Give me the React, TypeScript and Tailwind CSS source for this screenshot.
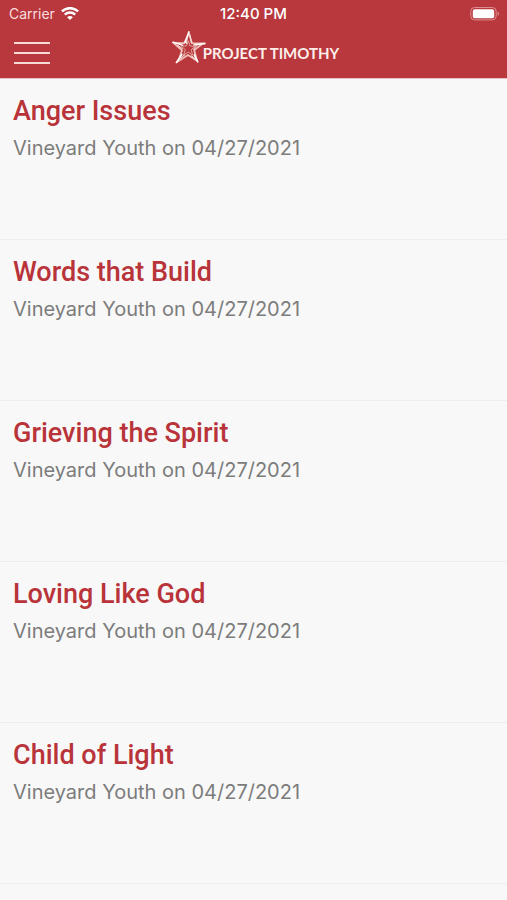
const talks = [
  { title: 'Anger Issues', byline: 'Vineyard Youth on 04/27/2021' },
  { title: 'Words that Build', byline: 'Vineyard Youth on 04/27/2021' },
  { title: 'Grieving the Spirit', byline: 'Vineyard Youth on 04/27/2021' },
  { title: 'Loving Like God', byline: 'Vineyard Youth on 04/27/2021' },
  { title: 'Child of Light', byline: 'Vineyard Youth on 04/27/2021' },
];

function WifiIcon() {
  return (
    <svg className="h-[14px] w-[18px]" viewBox="0 0 18 14" fill="none" stroke="#fff" aria-hidden="true">
      <path d="M.9 4.4C5.5.1 12.5.1 17.1 4.4" strokeWidth="2.6" />
      <path d="M3.8 7.6c3-2.8 7.4-2.8 10.4 0" strokeWidth="2.4" />
      <path d="M9 13 6.1 10.2c1.7-1.5 4.1-1.5 5.8 0Z" fill="#fff" stroke="none" />
    </svg>
  );
}

function BatteryIcon() {
  return (
    <svg className="h-[14px] w-[30px]" viewBox="0 0 30 14" aria-hidden="true">
      <rect x=".8" y=".5" width="25.4" height="12.4" rx="3.8" fill="none" stroke="#dd8f90" />
      <rect x="2.8" y="2.2" width="21.4" height="9" rx="1.8" fill="#fff" />
      <path d="M27.6 4.6V9c1.9-.7 1.9-3.7 0-4.4Z" fill="#dd8f90" />
    </svg>
  );
}

function StarLogo() {
  return (
    <svg className="h-[34px] w-[34px]" viewBox="0 0 34 34" fill="none" aria-hidden="true">
      <path
        d="m17 3.4 3 9.8 11 .2-8.8 6.6 2.8 10.8-9-5.8-9.6 6.2 3.6-11L1.6 13l10.6.2Z"
        stroke="#efc2bc"
        strokeWidth="1.8"
      />
      <path
        d="m16.4 10.8 1.5 5.2 5.2.3-4 3.4 1.6 5.4-4.6-3-4.6 3.2 1.8-5.6-4-3.6 5.2-.2Z"
        stroke="#e0a09c"
        strokeWidth="1"
      />
      <path d="M17 1.2 13 13M.6 12l10.6 3.4M33.6 13.4 21.4 15M4 33l6.2-9M26 32.4l-4-8" stroke="#fff" strokeWidth="1.5" />
      <path d="m17.8 4.4 1.6 8.8M5.4 15l5.4 4M25 15.2l-3.8 4.4M19 25.6l4.4 3.2M8.4 28.4l4.8-4M15.2 8.4l-.8 5.6" stroke="#fbe6e0" strokeWidth="1" />
    </svg>
  );
}

export default function App() {
  return (
    <div className="min-h-screen bg-[#f8f8f8] font-[Roboto,sans-serif]">
      <header className="border-b border-[#e6c4c5] bg-[#b8383d] text-white">
        <div className="grid h-7 grid-cols-3 items-center px-[7px] font-[Inter,sans-serif]">
          <div className="flex items-center gap-[6px] pl-[2px]">
            <span className="text-sm text-[#f8dedd]">Carrier</span>
            <WifiIcon />
          </div>
          <time className="text-center text-[15px] font-medium">12:40 PM</time>
          <div className="flex justify-end">
            <BatteryIcon />
          </div>
        </div>
        <div className="grid h-[50px] grid-cols-[1fr_auto_1fr] items-center px-[14px]">
          <button type="button" aria-label="Open menu" className="flex w-9 flex-col gap-2">
            <span className="h-[2px] w-full bg-[#f7d9d6]" />
            <span className="h-[2px] w-full bg-[#f7d9d6]" />
            <span className="h-[2px] w-full bg-[#f7d9d6]" />
          </button>
          <div className="flex items-center pb-3 pl-1">
            <StarLogo />
            <span className="-ml-[3px] pt-3 font-[Lato,sans-serif] text-[15px] leading-5 font-bold text-[#fdeeea]">PROJECT TIMOTHY</span>
          </div>
        </div>
      </header>
      <main>
        <ul>
          {talks.map((talk) => (
            <li key={talk.title} className="h-[161px] border-b border-[#eeeeee] px-[13px] pt-4">
              <h2 className="text-[27px] leading-8 font-medium text-[#b8343a]">{talk.title}</h2>
              <p className="pt-[7px] font-[Inter,sans-serif] text-xl leading-7 font-normal text-[#7c7c7c]">{talk.byline}</p>
            </li>
          ))}
        </ul>
      </main>
    </div>
  );
}
